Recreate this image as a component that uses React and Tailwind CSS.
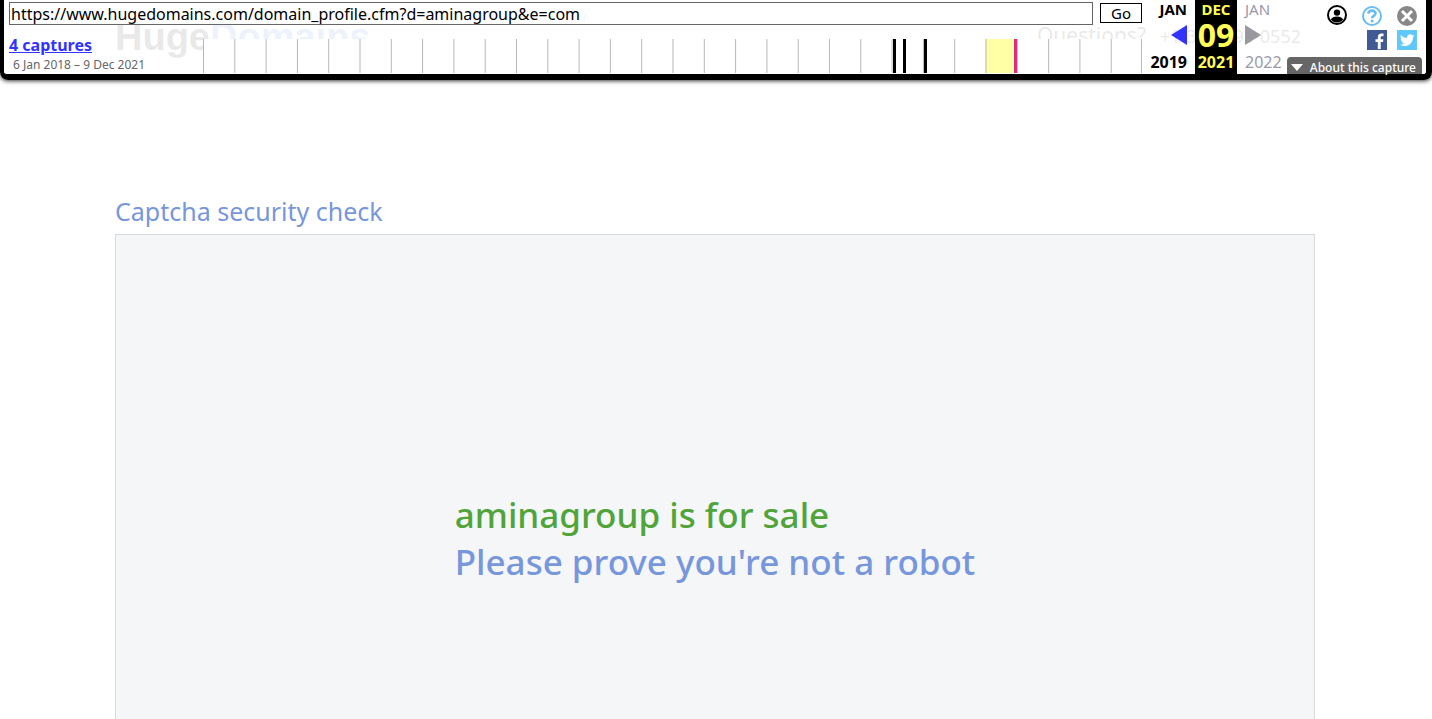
// src/App.jsx
import React from 'react';

const MONTH_COUNT = 30;
const SPARK_WIDTH = 939;

const captureBars = [
  { x: 690, color: '#000000' },
  { x: 700, color: '#000000' },
  { x: 721, color: '#000000' },
  { x: 811, color: '#dd2d82' },
];

const Sparkline = () => (
  <svg
    viewBox={`0 0 ${SPARK_WIDTH} 34`}
    preserveAspectRatio="none"
    className="block h-[34px] min-w-0 flex-1 bg-white"
    role="img"
    aria-label="Captures by year"
  >
    <rect x="782" y="0" width="30" height="34" fill="#ffffa5" />
    {Array.from({ length: MONTH_COUNT + 1 }, (_, i) => (
      <rect
        key={i}
        x={Math.min((i * SPARK_WIDTH) / MONTH_COUNT, SPARK_WIDTH - 1)}
        y="0"
        width="1"
        height="34"
        fill="#b8b8b8"
      />
    ))}
    {captureBars.map((bar) => (
      <rect key={bar.x} x={bar.x} y="0" width="3" height="34" fill={bar.color} />
    ))}
  </svg>
);

const UserIcon = () => (
  <svg viewBox="0 0 20 20" className="size-5">
    <circle cx="10" cy="10" r="9" fill="#fff" stroke="#000" strokeWidth="2" />
    <circle cx="10" cy="7.6" r="3.2" fill="#000" />
    <path d="M3.800 14.600c1.200-2.400 3-3.200 6.200-3.200s5 .8 6.200 3.200c-1.500 1.900-3.600 2.900-6.200 2.900s-4.700-1-6.200-2.900z" fill="#000" />
  </svg>
);

const HelpIcon = () => (
  <svg viewBox="0 0 20 20" className="size-5" fill="none" stroke="#6cbcf4">
    <circle cx="10" cy="10" r="9" strokeWidth="2" />
    <path d="M6.500 7.800c0-4.200 7-4.100 7-.3 0 2.400-3.400 2.400-3.400 4.700" strokeWidth="2.600" />
    <circle cx="10.100" cy="15" r="1.500" fill="#6cbcf4" stroke="none" />
  </svg>
);

const CloseIcon = () => (
  <svg viewBox="0 0 20 20" className="size-5">
    <circle cx="10" cy="10" r="10" fill="#888" />
    <path d="M5 5l10 10M15 5L5 15" stroke="#fff" strokeWidth="3" />
  </svg>
);

const FacebookIcon = () => (
  <svg viewBox="0 0 20 20" className="size-5">
    <rect width="20" height="20" fill="#415a96" />
    <path d="M10.800 19v-7H8.500V9.200h2.300V7.300c0-2.400 1.400-3.800 3.700-3.800h2v2.700h-1.400c-1.100 0-1.400.5-1.400 1.400v1.600h2.700l-.4 2.800h-2.300v7z" fill="#fff" />
  </svg>
);

const TwitterIcon = () => (
  <svg viewBox="0 0 20 20" className="size-5">
    <rect width="20" height="20" fill="#5ec9fa" />
    <path
      transform="translate(3 3) scale(.6)"
      d="M23.950 4.570a10 10 0 0 1-2.820.770 4.960 4.960 0 0 0 2.160-2.720c-.950.550-2 .950-3.130 1.180a4.920 4.920 0 0 0-8.380 4.480C7.690 8.090 4.070 6.130 1.640 3.160a4.820 4.820 0 0 0-.660 2.480c0 1.710.870 3.210 2.190 4.100a4.900 4.900 0 0 1-2.230-.620v.060a4.920 4.920 0 0 0 3.950 4.830 5 5 0 0 1-2.210.080 4.940 4.940 0 0 0 4.600 3.420A9.870 9.870 0 0 1 0 19.540a13.990 13.990 0 0 0 7.550 2.210c9.050 0 14-7.500 14-13.980 0-.210 0-.420-.020-.630a9.940 9.940 0 0 0 2.460-2.550z"
      fill="#fff"
    />
  </svg>
);

const ArchiveToolbar = () => (
  <div className="absolute inset-x-0 top-0 z-10 flex h-20 rounded-b-lg border-b-[6px] border-l-4 border-r-[6px] border-black bg-white/90 font-['Noto_Sans',sans-serif] text-black shadow-[0_1px_4px_rgba(0,0,0,0.8)]">

    {/* URL form, capture summary and timeline */}
    <div className="flex min-w-0 flex-1 flex-col pl-[5px] pt-0.5">
      <form className="flex gap-[7px]" onSubmit={(e) => e.preventDefault()}>
        <input
          type="text"
          aria-label="URL"
          defaultValue="https://www.hugedomains.com/domain_profile.cfm?d=aminagroup&e=com"
          className="h-[23px] min-w-0 flex-1 border border-[#666] bg-white px-px text-base leading-5 outline-none"
        />
        <button type="submit" className="mt-px h-5 w-[42px] border border-black bg-white text-[15px] leading-4">
          Go
        </button>
      </form>
      <div className="mt-3.5 flex">
        <div className="-mt-1 flex h-[38px] w-[194px] shrink-0 flex-col justify-between">
          <a href="#captures" className="self-start text-base font-bold leading-5 text-[#33f] underline">
            4 captures
          </a>
          <p className="pl-1 text-xs leading-4 text-[#666]">6 Jan 2018 – 9 Dec 2021</p>
        </div>
        <Sparkline />
      </div>
    </div>

    {/* Capture date */}
    <div className="grid shrink-0 grid-cols-[53px_42px_50px] text-base">
      <div className="flex flex-col items-end justify-between pb-0.5 pr-2 font-bold">
        <span className="text-[15px] leading-[18px]">JAN</span>
        <a href="#prev" aria-label="Previous capture">
          <svg viewBox="0 0 16 20" className="h-5 w-4"><path d="M16 0v20L0 10z" fill="#33f" /></svg>
        </a>
        <span className="leading-5">2019</span>
      </div>
      <div className="flex flex-col items-center justify-between bg-black pb-0.5 font-bold text-[#ff5]">
        <span className="text-[15px] leading-[18px]">DEC</span>
        <span className="text-[32px] leading-8">09</span>
        <span className="leading-5">2021</span>
      </div>
      <div className="flex flex-col items-start justify-between pb-0.5 pl-2 text-[#99a]">
        <span className="text-[15px] leading-[18px]">JAN</span>
        <svg viewBox="0 0 16 20" className="h-5 w-4"><path d="M0 0v20l16-10z" fill="#98989e" /></svg>
        <span className="leading-5">2022</span>
      </div>
    </div>

    {/* Account, help, sharing */}
    <div className="flex w-[139px] shrink-0 flex-col items-end justify-between pr-1">
      <div className="flex gap-[15px] pr-[5px] pt-1.5">
        <button type="button" aria-label="Sign in" className="-mt-px self-start"><UserIcon /></button>
        <div className="flex flex-col gap-1">
          <div className="flex gap-[15px]">
            <button type="button" aria-label="Help"><HelpIcon /></button>
            <button type="button" aria-label="Close toolbar"><CloseIcon /></button>
          </div>
          <div className="flex justify-end gap-[10px]">
            <a href="#facebook" aria-label="Share on Facebook"><FacebookIcon /></a>
            <a href="#twitter" aria-label="Share on Twitter"><TwitterIcon /></a>
          </div>
        </div>
      </div>
      <button
        type="button"
        className="flex h-[17px] w-[135px] items-center justify-between whitespace-nowrap rounded-t bg-[#666] pl-1 pr-1.5 pt-1 text-xs font-medium leading-4 text-white"
      >
        <svg viewBox="0 0 12 7" className="h-[7px] w-3"><path d="M0 0h12L6 7z" fill="#fff" /></svg>
        About this capture
      </button>
    </div>
  </div>
);

const SiteHeader = () => (
  <header className="flex h-20 items-start justify-between pt-[15px]">
    <div className="font-['Liberation_Sans',sans-serif] text-[38px] font-bold leading-[44px] text-[#222]">
      Huge<span className="text-[#4a7fd4]">Domains</span>
      <span className="text-xl text-[#b4c3dc]">.com</span>
    </div>
    <div className="flex items-baseline gap-3.5 pr-3.5 font-['Noto_Sans',sans-serif] leading-10 text-[#222]">
      <span className="text-[21px]">Questions?</span>
      <span className="text-lg leading-10">+1-303-893-0552</span>
    </div>
  </header>
);

const App = () => (
  <div className="relative flex min-h-screen flex-col bg-white pr-0.5 font-['Noto_Sans',sans-serif]">
    <ArchiveToolbar />

    <div className="mx-auto flex w-full max-w-[1200px] flex-1 flex-col">
      <SiteHeader />

      <main className="flex flex-1 flex-col pt-[111px]">
        <h1 className="text-[25px] leading-10 text-[#7796dc]">Captcha security check</h1>
        <section className="mt-[3px] flex flex-1 justify-center border border-b-0 border-[#d6dadd] bg-[#f4f6f8] pt-64 text-[35px] font-medium leading-[47px]">
          <div>
            <h2 className="text-[#50a43a]">aminagroup is for sale</h2>
            <p className="text-[#7796dc]">Please prove you're not a robot</p>
          </div>
        </section>
      </main>
    </div>
  </div>
);

export default App;
